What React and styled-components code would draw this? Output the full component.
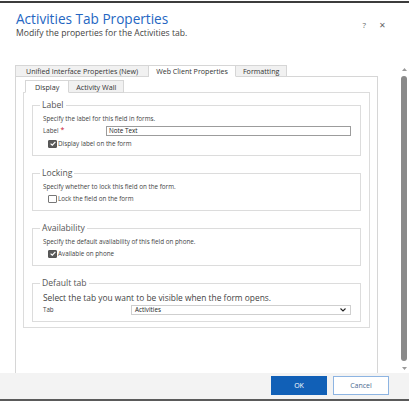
import styled, { createGlobalStyle } from "styled-components";

const GlobalStyle = createGlobalStyle`
  html, body {
    margin: 0;
    padding: 0;
    background: #fff;
  }
  body {
    font-family: "Open Sans", "Noto Sans", sans-serif;
    color: #333;
  }
`;

const Dialog = styled.div`
  width: 409px;
  height: 400px;
  margin-top: 1px;
  box-sizing: border-box;
  border-top: 2px solid #3c3c3c;
  border-bottom: 2px solid #5a5a5a;
  display: flex;
  flex-direction: column;
  overflow: hidden;
`;

const Header = styled.div`
  height: 62px;
  box-sizing: border-box;
  padding: 8px 16px 0 16px;
  display: flex;
  justify-content: space-between;
  align-items: flex-start;
`;

const Title = styled.h1`
  margin: 0;
  font-size: 13.6px;
  line-height: 16px;
  font-weight: 400;
  color: #2466c2;
`;

const Subtitle = styled.div`
  margin-top: 1px;
  font-size: 8.6px;
  line-height: 10px;
  color: #444;
`;

const HeaderIcons = styled.div`
  display: flex;
  gap: 13px;
  margin-top: 8px;
  margin-right: 7px;
  font-size: 8px;
  color: #666;
`;

const Body = styled.div`
  flex: 1;
  display: flex;
  min-height: 0;
`;

const ContentArea = styled.div`
  flex: 1;
  padding-left: 15px;
  display: flex;
  flex-direction: column;
`;

const TabStrip = styled.div`
  display: flex;
  position: relative;
  z-index: 1;
  padding-left: ${(p) => p.$indent || 0}px;
`;

const Tab = styled.div`
  height: ${(p) => p.$h}px;
  box-sizing: border-box;
  padding: 0 ${(p) => p.$pad}px;
  font-size: ${(p) => p.$size}px;
  line-height: ${(p) => p.$h - 1}px;
  color: #333;
  white-space: nowrap;
  border: 1px solid #d6d6d6;
  border-left-width: ${(p) => (p.$first ? 1 : 0)}px;
  border-bottom-color: ${(p) => (p.$active ? "#fff" : "#d6d6d6")};
  background: ${(p) => (p.$active ? "#fff" : "#f1f1f1")};
  margin-bottom: -1px;
`;

const OuterPanel = styled.div`
  width: 363px;
  flex: 1;
  box-sizing: border-box;
  border: 1px solid #d6d6d6;
  border-bottom: none;
  padding: 3px 7px 0 7px;
`;

const InnerPanel = styled.div`
  border: 1px solid #dcdcdc;
  padding: 7px 8px 5px 8px;
  display: flex;
  flex-direction: column;
  gap: 12px;
`;

const Group = styled.fieldset`
  margin: 0;
  border: 1px solid #dcdcdc;
  padding: 0 9px 5px 10px;
  min-width: 0;
`;

const Legend = styled.legend`
  margin-left: -3px;
  padding: 0 2px;
  font-size: 8.6px;
  line-height: 10px;
  color: #555;
`;

const Description = styled.div`
  margin-top: 4px;
  font-size: ${(p) => (p.$large ? 8.4 : 6.3)}px;
  line-height: ${(p) => (p.$large ? 11 : 10)}px;
  color: #444;
  white-space: nowrap;
`;

const Row = styled.div`
  display: flex;
  align-items: center;
  height: 13px;
`;

const FieldLabel = styled.div`
  width: ${(p) => p.$w}px;
  flex: none;
  font-size: 6.2px;
  color: #444;
`;

const Required = styled.span`
  color: #c8102e;
  font-size: 7px;
  margin-left: 2px;
  position: relative;
  top: -1px;
`;

const TextInput = styled.div`
  flex: 1;
  height: 10px;
  box-sizing: border-box;
  border: 1px solid #9c9c9c;
  padding-left: 2px;
  font-size: 6.3px;
  line-height: 8px;
  color: #222;
`;

const Select = styled.div`
  flex: 1;
  height: 10px;
  box-sizing: border-box;
  border: 1px solid #cfcfcf;
  padding: 0 4px 0 3px;
  font-size: 6.3px;
  line-height: 8px;
  color: #222;
  display: flex;
  align-items: center;
  justify-content: space-between;
`;

const CheckRow = styled.label`
  display: flex;
  align-items: center;
  height: 13px;
  padding-left: 5px;
  gap: 1px;
  font-size: 6.3px;
  color: #444;
`;

const Box = styled.span`
  width: 9px;
  height: 8px;
  box-sizing: border-box;
  border: 1px solid ${(p) => (p.$checked ? "#555" : "#777")};
  border-radius: 1px;
  background: ${(p) => (p.$checked ? "#5a5a5a" : "#fff")};
  display: flex;
  align-items: center;
  justify-content: center;
`;

const ScrollBar = styled.div`
  width: 8px;
  margin-right: 1px;
  padding-top: 3px;
  display: flex;
  flex-direction: column;
  align-items: center;
  padding-bottom: 3px;
`;

const Thumb = styled.div`
  width: 6px;
  flex: 1;
  margin: 5px 0 6px 0;
  border-radius: 3px;
  background: #8a8a8a;
`;

const Footer = styled.div`
  height: 26px;
  flex: none;
  box-sizing: border-box;
  background: #f3f3f3;
  display: flex;
  justify-content: flex-end;
  align-items: flex-start;
  gap: 6px;
  padding: 3px 20px 0 0;
`;

const Button = styled.button`
  width: 56px;
  height: 19px;
  box-sizing: border-box;
  font-family: inherit;
  font-size: 7px;
  border: 1px solid ${(p) => (p.$primary ? "#1160b7" : "#8db4e2")};
  background: ${(p) => (p.$primary ? "#1160b7" : "#fff")};
  color: ${(p) => (p.$primary ? "#fff" : "#4a6a90")};
  padding: 0;
`;

function Check({ checked, children }) {
  return (
    <CheckRow>
      <Box $checked={checked}>
        {checked && (
          <svg width="6" height="5" viewBox="0 0 6 5">
            <path d="M0.6 2.6 L2.3 4.2 L5.4 0.8" stroke="#fff" strokeWidth="1.2" fill="none" />
          </svg>
        )}
      </Box>
      {children}
    </CheckRow>
  );
}

function Arrow({ up }) {
  return (
    <svg width="5" height="3" viewBox="0 0 5 3">
      <path d={up ? "M0 3 L2.5 0 L5 3 Z" : "M0 0 L2.5 3 L5 0 Z"} fill="#9a9a9a" />
    </svg>
  );
}

export default function App() {
  return (
    <>
      <GlobalStyle />
      <Dialog>
        <Header>
          <div>
            <Title>Activities Tab Properties</Title>
            <Subtitle>Modify the properties for the Activities tab.</Subtitle>
          </div>
          <HeaderIcons>
            <span>?</span>
            <span>✕</span>
          </HeaderIcons>
        </Header>

        <Body>
          <ContentArea>
            <TabStrip>
              <Tab $h={12} $pad={10} $size={7.1} $first>Unified Interface Properties (New)</Tab>
              <Tab $h={12} $pad={7} $size={7.1} $active>Web Client Properties</Tab>
              <Tab $h={12} $pad={7} $size={7.1}>Formatting</Tab>
            </TabStrip>
            <OuterPanel>
              <TabStrip $indent={2}>
                <Tab $h={13} $pad={9} $size={7.2} $first $active>Display</Tab>
                <Tab $h={13} $pad={7} $size={7.2}>Activity Wall</Tab>
              </TabStrip>
              <InnerPanel>
                <Group>
                  <Legend>Label</Legend>
                  <Description>Specify the label for this field in forms.</Description>
                  <Row>
                    <FieldLabel $w={63}>
                      Label<Required>*</Required>
                    </FieldLabel>
                    <TextInput>Note Text</TextInput>
                  </Row>
                  <Check checked>Display label on the form</Check>
                </Group>

                <Group>
                  <Legend>Locking</Legend>
                  <Description>Specify whether to lock this field on the form.</Description>
                  <Check>Lock the field on the form</Check>
                </Group>

                <Group>
                  <Legend>Availability</Legend>
                  <Description>Specify the default availability of this field on phone.</Description>
                  <Check checked>Available on phone</Check>
                </Group>

                <Group>
                  <Legend>Default tab</Legend>
                  <Description $large>Select the tab you want to be visible when the form opens.</Description>
                  <Row>
                    <FieldLabel $w={88}>Tab</FieldLabel>
                    <Select>
                      Activities
                      <svg width="6" height="4" viewBox="0 0 6 4">
                        <path d="M0.5 0.5 L3 3 L5.5 0.5" stroke="#222" strokeWidth="1.1" fill="none" />
                      </svg>
                    </Select>
                  </Row>
                </Group>
              </InnerPanel>
            </OuterPanel>
          </ContentArea>

          <ScrollBar>
            <Arrow up />
            <Thumb />
            <Arrow />
          </ScrollBar>
        </Body>

        <Footer>
          <Button $primary>OK</Button>
          <Button>Cancel</Button>
        </Footer>
      </Dialog>
    </>
  );
}
